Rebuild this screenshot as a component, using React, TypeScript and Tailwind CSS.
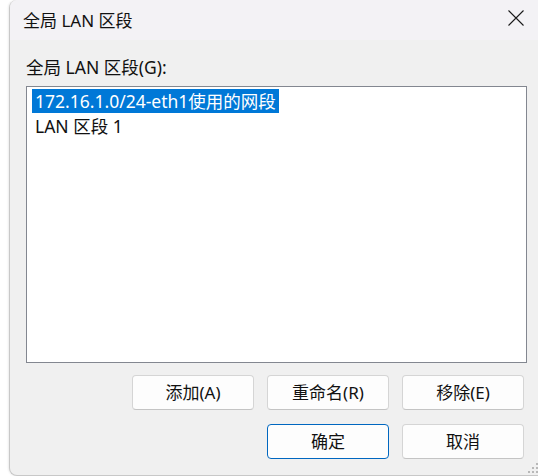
import React from "react";

const font = { fontFamily: '"Noto Sans", "Noto Sans CJK SC", sans-serif' };

function Btn({ children, primary }: { children: React.ReactNode; primary?: boolean }) {
  return (
    <button
      className={
        primary
          ? "w-[122px] h-[35px] rounded-[4px] border border-[#0067c0] bg-[#fdfdfd] text-[17px] text-[#111] flex items-center justify-center"
          : "w-[122px] h-[35px] rounded-[4px] border border-[#d5d5d5] border-b-[#c4c4c4] bg-[#fdfdfd] text-[17px] text-[#111] flex items-center justify-center"
      }
    >
      {children}
    </button>
  );
}

export default function App() {
  return (
    <div className="w-[538px] h-[476px] bg-white overflow-hidden" style={font}>
      <div className="ml-[9px] w-[560px] h-[476px] rounded-tl-[8px] rounded-bl-[8px] border-l border-b border-[#c8c8c8] bg-[#f0f0f0] overflow-hidden relative shadow-[-1px_0_2px_rgba(0,0,0,0.08)]">
        <div className="h-[40px] bg-[#f3f2f5] flex items-center pl-[13px] relative">
          <span className="text-[17px] text-[#111] leading-none">全局 LAN 区段</span>
          <svg className="absolute left-[498px] top-[10px]" width="16" height="16" viewBox="0 0 16 16">
            <path d="M0.5 0.5 L15.5 15.5 M15.5 0.5 L0.5 15.5" stroke="#1a1a1a" strokeWidth="1.1" fill="none" />
          </svg>
        </div>
        <div className="pl-[16px] pt-[16px]">
          <div className="text-[17.5px] text-[#111] leading-[22px] h-[30px]">全局 LAN 区段(G):</div>
          <div className="w-[501px] h-[277px] border border-[#838790] bg-white pl-[5px] pt-[2px]">
            <div className="inline-block bg-[#0078d7] text-white text-[17.5px] leading-[24px] px-[3px]">
              172.16.1.0/24-eth1使用的网段
            </div>
            <div className="text-[17.5px] leading-[24px] px-[3px] text-[#111]">LAN 区段 1</div>
          </div>
          <div className="flex gap-[13px] mt-[12px] pl-[106px]">
            <Btn>添加(A)</Btn>
            <Btn>重命名(R)</Btn>
            <Btn>移除(E)</Btn>
          </div>
          <div className="flex gap-[13px] mt-[14px] pl-[241px]">
            <Btn primary>确定</Btn>
            <Btn>取消</Btn>
          </div>
        </div>
        <svg className="absolute left-[518px] top-[463px]" width="12" height="12" viewBox="0 0 12 12">
          <g fill="#b8b8b8">
            <rect x="8" y="0" width="2" height="2" />
            <rect x="4" y="4" width="2" height="2" />
            <rect x="8" y="4" width="2" height="2" />
            <rect x="0" y="8" width="2" height="2" />
            <rect x="4" y="8" width="2" height="2" />
            <rect x="8" y="8" width="2" height="2" />
          </g>
        </svg>
      </div>
    </div>
  );
}
